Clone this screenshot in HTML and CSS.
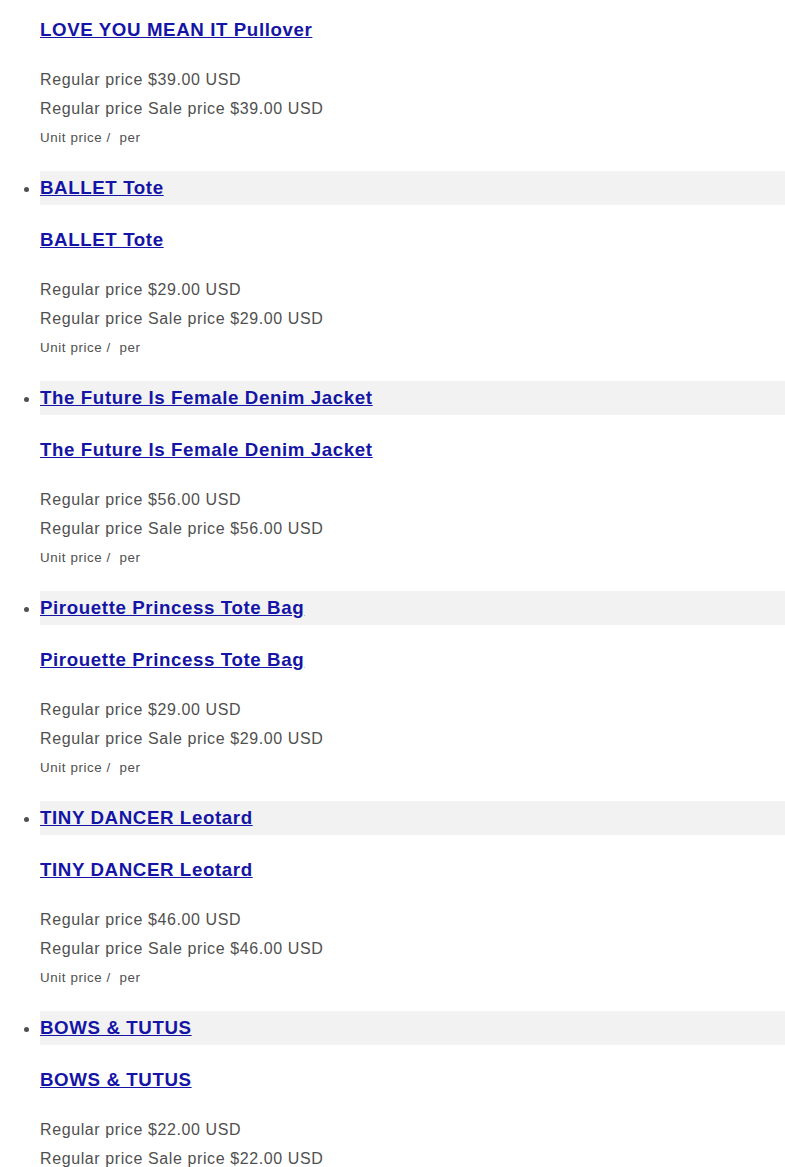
FILE: index.html
```html
<!DOCTYPE html>
<html lang="en">
<head>
<meta charset="utf-8">
<title>Products</title>
<link rel="stylesheet" href="styles.css">
</head>
<body>
<ul class="product-list">
  <li class="product">
    <div class="card-bar"><a class="card-link" href="#">LOVE YOU MEAN IT Pullover</a></div>
    <h3 class="card-title"><a class="card-link" href="#">LOVE YOU MEAN IT Pullover</a></h3>
    <div class="price">
      <div class="price-line">Regular price $39.00 USD</div>
      <div class="price-line">Regular price Sale price $39.00 USD</div>
      <div class="price-line unit-line"><small class="unit">Unit price /&nbsp; per</small></div>
    </div>
  </li>
  <li class="product">
    <div class="card-bar"><a class="card-link" href="#">BALLET Tote</a></div>
    <h3 class="card-title"><a class="card-link" href="#">BALLET Tote</a></h3>
    <div class="price">
      <div class="price-line">Regular price $29.00 USD</div>
      <div class="price-line">Regular price Sale price $29.00 USD</div>
      <div class="price-line unit-line"><small class="unit">Unit price /&nbsp; per</small></div>
    </div>
  </li>
  <li class="product">
    <div class="card-bar"><a class="card-link" href="#">The Future Is Female Denim Jacket</a></div>
    <h3 class="card-title"><a class="card-link" href="#">The Future Is Female Denim Jacket</a></h3>
    <div class="price">
      <div class="price-line">Regular price $56.00 USD</div>
      <div class="price-line">Regular price Sale price $56.00 USD</div>
      <div class="price-line unit-line"><small class="unit">Unit price /&nbsp; per</small></div>
    </div>
  </li>
  <li class="product">
    <div class="card-bar"><a class="card-link" href="#">Pirouette Princess Tote Bag</a></div>
    <h3 class="card-title"><a class="card-link" href="#">Pirouette Princess Tote Bag</a></h3>
    <div class="price">
      <div class="price-line">Regular price $29.00 USD</div>
      <div class="price-line">Regular price Sale price $29.00 USD</div>
      <div class="price-line unit-line"><small class="unit">Unit price /&nbsp; per</small></div>
    </div>
  </li>
  <li class="product">
    <div class="card-bar"><a class="card-link" href="#">TINY DANCER Leotard</a></div>
    <h3 class="card-title"><a class="card-link" href="#">TINY DANCER Leotard</a></h3>
    <div class="price">
      <div class="price-line">Regular price $46.00 USD</div>
      <div class="price-line">Regular price Sale price $46.00 USD</div>
      <div class="price-line unit-line"><small class="unit">Unit price /&nbsp; per</small></div>
    </div>
  </li>
  <li class="product">
    <div class="card-bar"><a class="card-link" href="#">BOWS &amp; TUTUS</a></div>
    <h3 class="card-title"><a class="card-link" href="#">BOWS &amp; TUTUS</a></h3>
    <div class="price">
      <div class="price-line">Regular price $22.00 USD</div>
      <div class="price-line">Regular price Sale price $22.00 USD</div>
      <div class="price-line unit-line"><small class="unit">Unit price /&nbsp; per</small></div>
    </div>
  </li>
</ul>
</body>
</html>
```

FILE: styles.css
```css
html, body {
  margin: 0;
  padding: 0;
  background: #ffffff;
}

body {
  font-family: "Liberation Sans", Arial, sans-serif;
  font-size: 16px;
  letter-spacing: 0.6px;
  color: #505050;
  overflow: hidden;
}

.product-list {
  margin: -39px 0 0 0;
  padding: 0 0 0 40px;
  list-style: disc;
}

.product {
  height: 210px;
  overflow: visible;
}

.card-bar {
  background: #f2f2f2;
  height: 34px;
  font-size: 18.72px;
  font-weight: bold;
  line-height: 34px;
}

.card-title {
  margin: 23px 0 0 0;
  font-size: 18.72px;
  font-weight: bold;
  line-height: 24px;
}

.card-link {
  color: #1414a6;
  text-decoration: underline;
}

.price {
  margin-top: 24px;
}

.price-line {
  line-height: 28.8px;
}

.unit-line {
  line-height: 26px;
}

.unit {
  font-size: 13.33px;
}
```
